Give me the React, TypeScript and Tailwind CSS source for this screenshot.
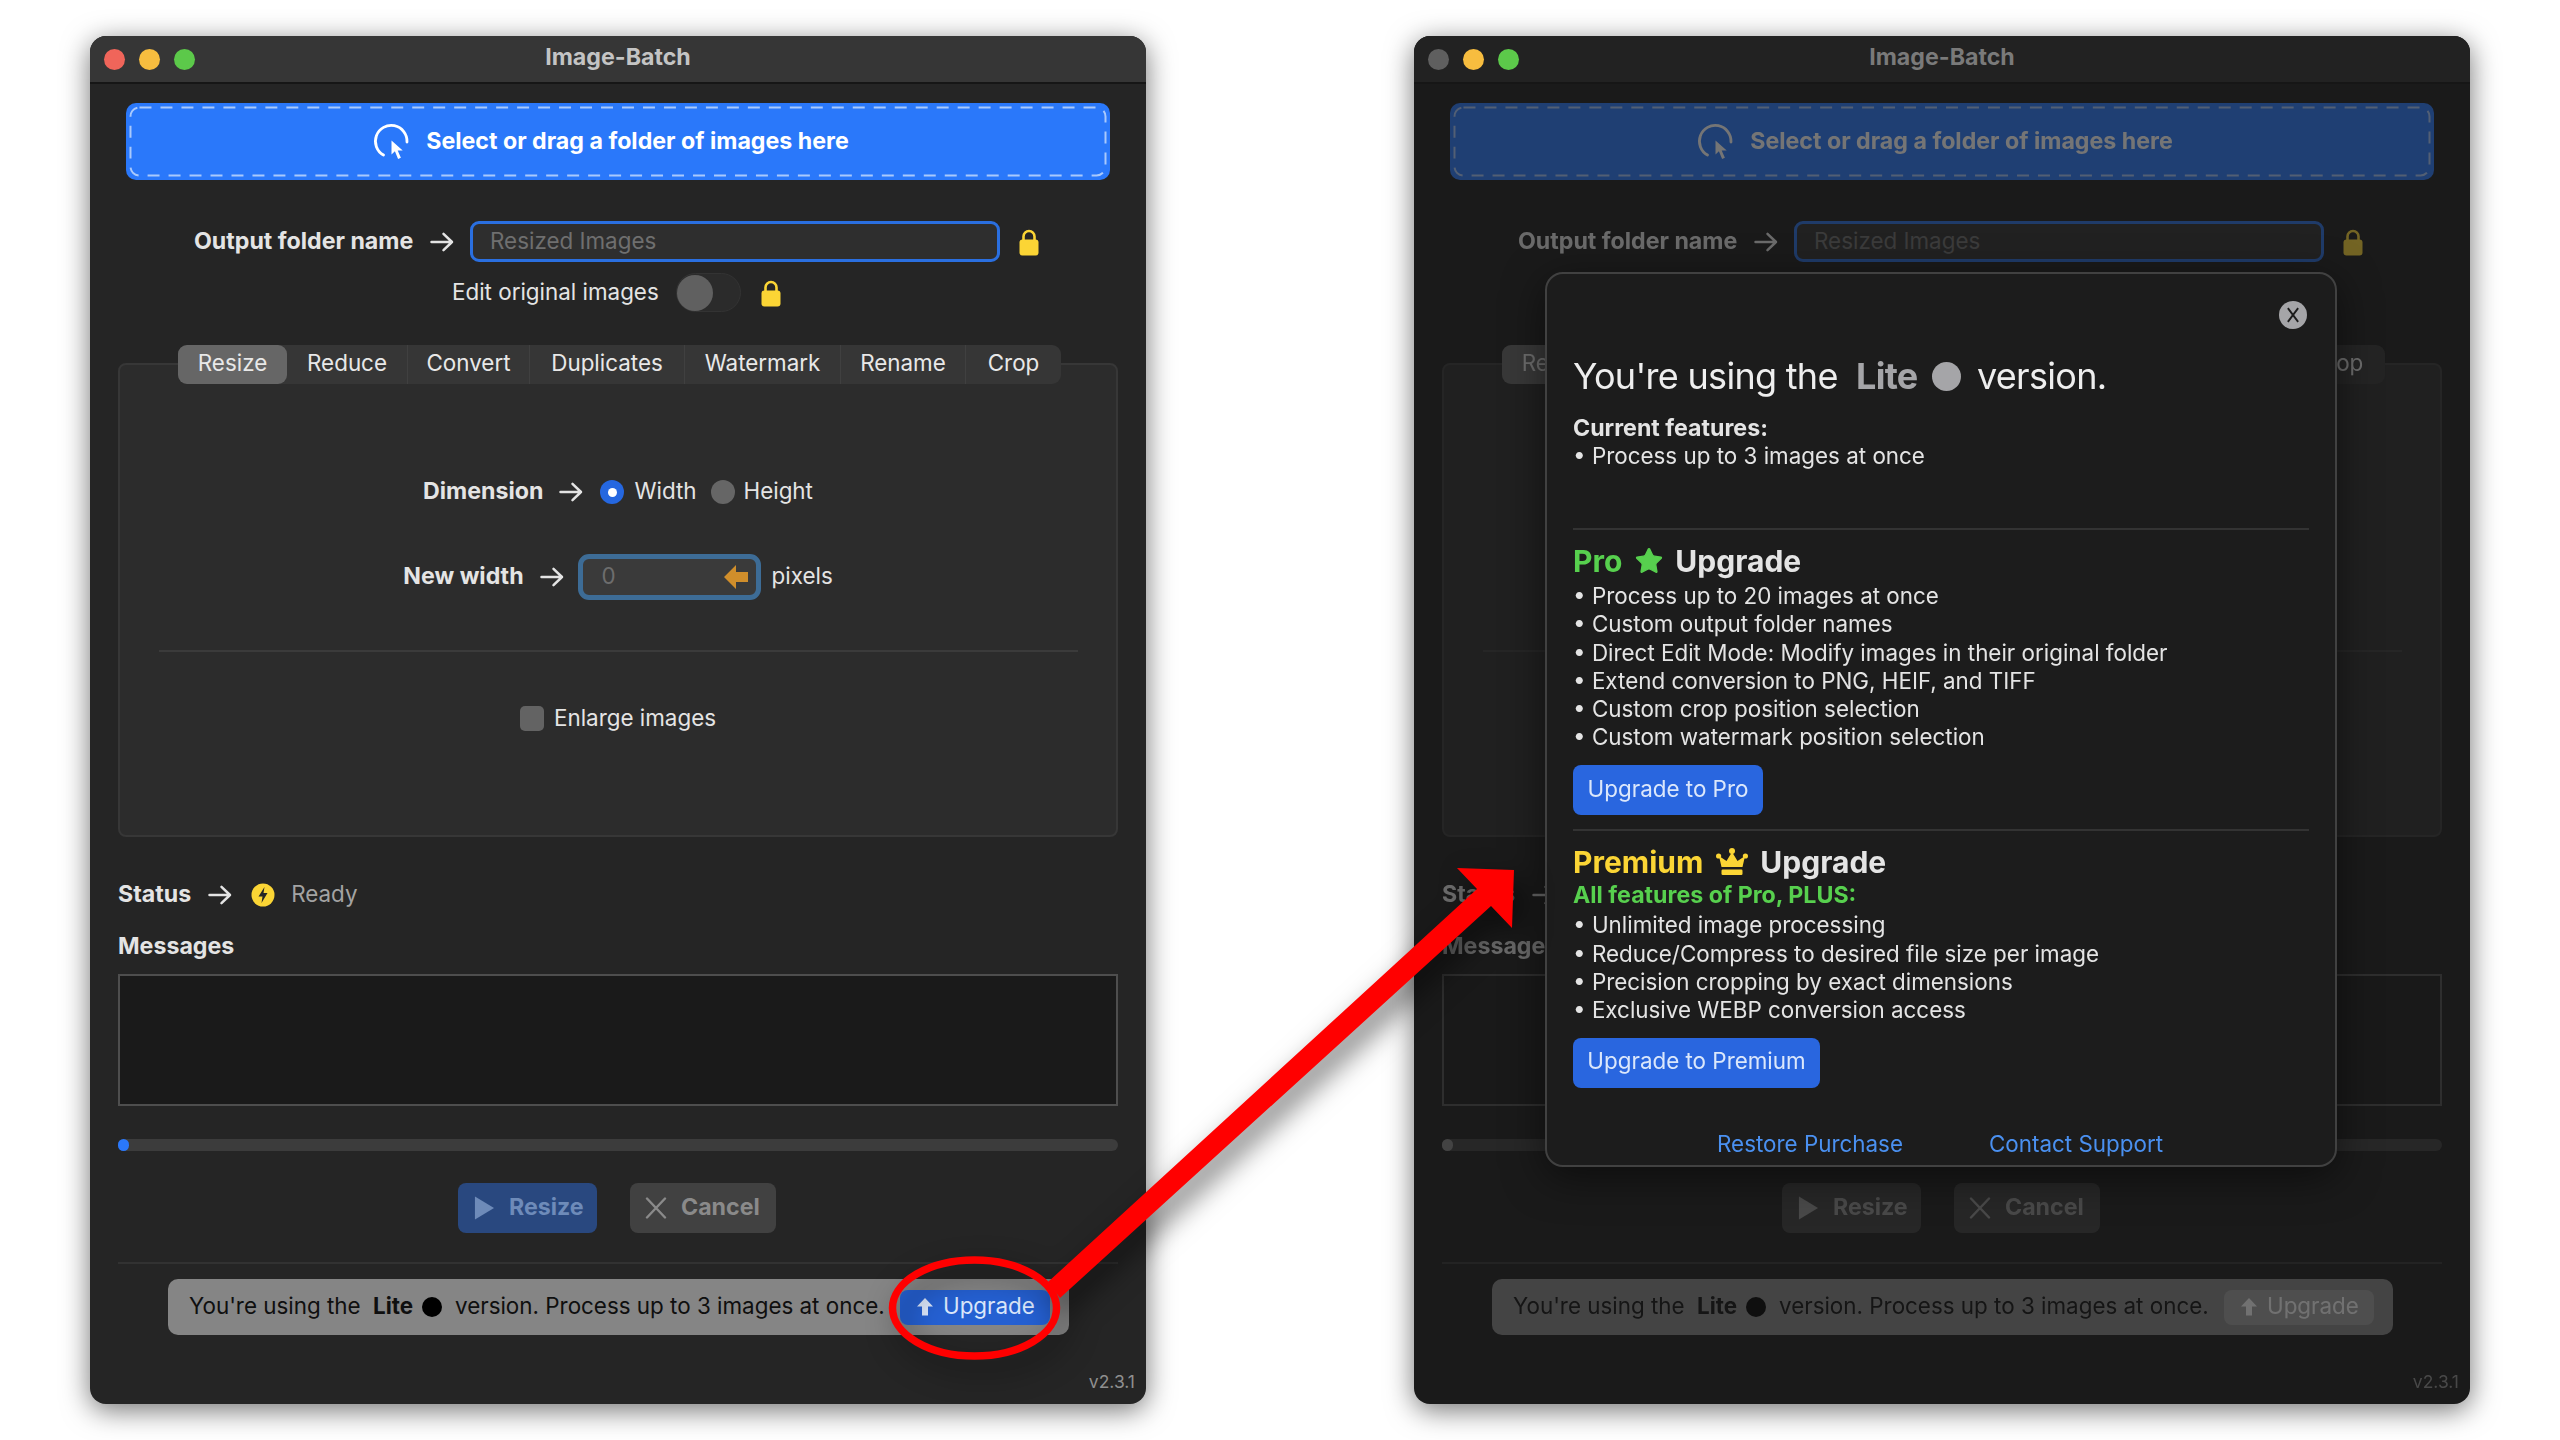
import React from "react";
import { Star } from "lucide-react";

const font = { fontFamily: "Inter, 'Liberation Sans', sans-serif" };
const reg = "text-[22.4px] leading-none pb-[1px] whitespace-nowrap";
const bold = "text-[23.2px] leading-none pb-[1px] font-bold whitespace-nowrap";

function Lock({ className = "" }: { className?: string }) {
  return (
    <svg viewBox="0 0 20 28" className={className} fill="none">
      <path d="M4.500 13V8.500a5.500 5.500 0 0 1 11 0V13" stroke="#fbd535" strokeWidth="2.600" />
      <rect x="0.500" y="11.500" width="19" height="16" rx="3" fill="#fbd535" />
    </svg>
  );
}

function Arrow({ className = "" }: { className?: string }) {
  return (
    <svg viewBox="0 0 24 20" className={"w-[24px] h-[20px] shrink-0 " + className} fill="none" stroke="#e4e4e4" strokeWidth="2.500" strokeLinecap="round" strokeLinejoin="round">
      <path d="M1.500 10h20.500M13.500 1.800 22 10l-8.500 8.200" />
    </svg>
  );
}

function ClickIcon() {
  return (
    <svg viewBox="0 0 38 38" className="w-[38px] h-[38px]" fill="none">
      <path d="M11.500 32A15.800 15.800 0 1 1 35 19" stroke="white" strokeWidth="2.800" strokeLinecap="round" />
      <path d="M19.500 17.500V31.500l3.400-3.200 3.200 7.600 2.800-1.200-3.200-7.300h5z" fill="white" />
    </svg>
  );
}

function BoltIcon() {
  return (
    <svg viewBox="0 0 24 24" className="w-[24px] h-[24px]">
      <circle cx="12" cy="12" r="11.500" fill="#fbd535" />
      <path d="M13.500 4 7.500 13.500h4L10.500 20l6-10h-4z" fill="#252525" />
    </svg>
  );
}

function UpArrow({ className = "" }: { className?: string }) {
  return (
    <svg viewBox="0 0 16 18" className={className} fill="currentColor">
      <path d="M8 0 16 8.500H11V17.500H5V8.500H0z" />
    </svg>
  );
}

function CrownIcon() {
  return (
    <svg viewBox="0 0 32 28" className="w-[32px] h-[28px]" fill="#fbd535">
      <circle cx="16" cy="3" r="3" />
      <circle cx="2.600" cy="8" r="2.600" />
      <circle cx="29.400" cy="8" r="2.600" />
      <path d="M16 4 21.500 13 29 8 26.500 19H5.500L3 8l7.500 5z" />
      <rect x="5.500" y="21.500" width="21" height="5.500" rx="1.200" />
    </svg>
  );
}

const tabs = [
  ["Resize", "w-[109px]"],
  ["Reduce", "w-[121px]"],
  ["Convert", "w-[122px]"],
  ["Duplicates", "w-[155px]"],
  ["Watermark", "w-[156px]"],
  ["Rename", "w-[125px]"],
  ["Crop", "w-[95px]"],
];

function WindowBody({ dimmed }: { dimmed: boolean }) {
  const resizeFill = dimmed ? "#929292" : "#6e8bb9";
  const cancelStroke = dimmed ? "#929292" : "#8a8a8a";
  return (
    <div className="flex flex-col text-[#e4e4e4]">
      <div className="relative mx-[36px] mt-[19px] h-[77px] rounded-[10px] bg-[#2a78fa] flex items-center justify-center gap-[16px] pr-[15px]">
        <svg className="absolute left-0 top-0 w-full h-full" viewBox="0 0 985 77" fill="none">
          <rect x="4.500" y="4.500" width="976" height="68" rx="9" stroke="#a9c9fc" strokeWidth="2" strokeDasharray="12 9" />
        </svg>
        <ClickIcon />
        <span className={bold + " text-white translate-y-[1px]"}>Select or drag a folder of images here</span>
      </div>

      <div className="mt-[41px] h-[41px] flex items-center pl-[104px]">
        <span className={bold + " w-[219px] translate-y-[1px]"}>Output folder name</span>
        <Arrow className="ml-[17px]" />
        <div className="ml-[16px] w-[530px] h-[41px] rounded-[9px] border-[3px] border-[#2a6fe0] bg-[#2e2e2e] flex items-center px-[17px]">
          <span className={reg + " text-[#6f6f6f]"}>Resized Images</span>
        </div>
        <Lock className="ml-[19px] w-[20px] h-[28px]" />
      </div>

      <div className="mt-[11px] h-[39px] flex items-center pl-[362px]">
        <span className={reg + " w-[208px]"}>Edit original images</span>
        <div className="ml-[16px] w-[65px] h-[39px] rounded-full bg-[#2b2b2b] border border-[#333] flex items-center">
          <div className="w-[36px] h-[36px] rounded-full bg-[#606060]" />
        </div>
        <Lock className="ml-[20px] w-[20px] h-[28px]" />
      </div>

      <div className="mx-[28px] mt-[51px] h-[474px] rounded-[8px] bg-[#2c2c2c] border-2 border-[#373737] flex flex-col items-center">
        <div className="-mt-[20px] w-[883px] h-[39px] ml-[58px] self-start shrink-0 rounded-[9px] bg-[#363636] flex items-center">
          {tabs.map(([t, w], i) => (
            <div
              key={t}
              className={
                w +
                " h-full flex items-center justify-center " +
                (i === 0 ? "rounded-[9px] bg-[#666666]" : i < 6 ? "border-r border-[#404040]" : "")
              }
            >
              <span className={reg + " text-[#e8e8e8] -translate-y-[1px]"}>{t}</span>
            </div>
          ))}
        </div>

        <div className="mt-[96px] h-[24px] flex items-center">
          <span className={bold}>Dimension</span>
          <Arrow className="ml-[16px]" />
          <div className="ml-[17px] w-[24px] h-[24px] rounded-full bg-[#2567e0] flex items-center justify-center">
            <div className="w-[9px] h-[9px] rounded-full bg-white" />
          </div>
          <span className={reg + " ml-[10px]"}>Width</span>
          <div className="ml-[14px] w-[24px] h-[24px] rounded-full bg-[#666666]" />
          <span className={reg + " ml-[9px]"}>Height</span>
        </div>

        <div className="mt-[50px] h-[46px] flex items-center">
          <span className={bold}>New width</span>
          <Arrow className="ml-[16px]" />
          <div className="ml-[14px] w-[183px] h-[46px] rounded-[11px] border-[5px] border-[#3d6c96] bg-[#3a3a3a] flex items-center justify-between pl-[19px] pr-[8px]">
            <span className={reg + " text-[#6d6d6d]"}>0</span>
            <svg viewBox="0 0 24 24" className="w-[24px] h-[24px] rotate-[-90deg]" fill="#d08e2b">
              <path d="M12 0 24 12H17V24H7V12H0z" />
            </svg>
          </div>
          <span className={reg + " ml-[11px]"}>pixels</span>
        </div>

        <div className="mt-[50px] w-[919px] h-[2px] bg-[#3b3b3b]" />

        <div className="mt-[54px] h-[25px] flex items-center">
          <div className="w-[24px] h-[25px] rounded-[5px] bg-[#636363]" />
          <span className={reg + " ml-[10px]"}>Enlarge images</span>
        </div>
      </div>

      <div className="mx-[28px] mt-[46px] h-[24px] flex items-center">
        <span className={bold}>Status</span>
        <Arrow className="ml-[17px]" />
        <div className="ml-[19px]"><BoltIcon /></div>
        <span className={reg + " ml-[16px] text-[#a3a3a3]"}>Ready</span>
      </div>

      <div className="mx-[28px] mt-[28px] h-[24px] flex items-center">
        <span className={bold}>Messages</span>
      </div>

      <div className="mx-[28px] mt-[15px] h-[132px] bg-[#1a1a1a] border-2 border-[#4e4e4e]" />

      <div className="mx-[28px] mt-[33px] h-[12px] rounded-full bg-[#3c3c3c]">
        <div className={"w-[11px] h-full rounded-full " + (dimmed ? "bg-[#828282]" : "bg-[#2a78fa]")} />
      </div>

      <div className="mt-[32px] h-[50px] flex items-center justify-center gap-[33px] pr-[2px]">
        <div className={"w-[139px] h-full rounded-[8px] flex items-center pl-[16px] gap-[14px] " + (dimmed ? "bg-[#3d3d3d]" : "bg-[#29487f]")}>
          <svg viewBox="0 0 22 24" className="w-[21px] h-[24px]" fill={resizeFill}><path d="M1 0 21 12 1 24z" /></svg>
          <span className={bold + (dimmed ? " text-[#929292]" : " text-[#6e8bb9]")}>Resize</span>
        </div>
        <div className={"w-[146px] h-full rounded-[8px] flex items-center pl-[15px] gap-[14px] " + (dimmed ? "bg-[#3d3d3d]" : "bg-[#414141]")}>
          <svg viewBox="0 0 22 22" className="w-[22px] h-[22px]" fill="none" stroke={cancelStroke} strokeWidth="2.400" strokeLinecap="round"><path d="M2 1.500 20 20.500M20 1.500 2 20.500" /></svg>
          <span className={bold + (dimmed ? " text-[#929292]" : " text-[#8a8a8a]")}>Cancel</span>
        </div>
      </div>

      <div className="mx-[28px] mt-[29px] h-[2px] bg-[#323232]" />

      <div className="ml-[78px] mt-[15px] w-[901px] h-[56px] rounded-[10px] bg-[#858585] flex items-center pl-[21px] text-[#0f0f0f]">
        <span className={reg + " w-[170px]"}>You're using the</span>
        <span className={reg + " ml-[14px] w-[40px] font-bold"}>Lite</span>
        <div className="ml-[9px] w-[20px] h-[20px] rounded-full bg-black" />
        <span className={reg + " ml-[13px] w-[431px]"}>version. Process up to 3 images at once.</span>
        <div className={"ml-[14px] w-[150px] h-[35px] rounded-[8px] flex items-center pl-[17px] gap-[10px] " + (dimmed ? "bg-[#9e9e9e] text-[#f5f5f5]" : "bg-[#2560d2] text-[#dbe7fb]")}>
          <UpArrow className="w-[16px] h-[18px]" />
          <span className={reg}>Upgrade</span>
        </div>
      </div>

      <div className="mt-[39px] h-[20px] pr-[11px] flex items-center justify-end text-[17.5px] pb-[3px] text-[#8f8f8f]">v2.3.1</div>
    </div>
  );
}

function Bullets({ items }: { items: string[] }) {
  return (
    <div className="flex flex-col">
      {items.map((t) => (
        <div key={t} className="h-[28.2px] leading-[26px] text-[22.4px] whitespace-nowrap">
          • {t}
        </div>
      ))}
    </div>
  );
}

function Modal() {
  return (
    <div className="absolute left-[131px] top-[236px] w-[792px] h-[895px] rounded-[18px] bg-[#1c1c1c] border-2 border-[#414141] shadow-[0_10px_40px_rgba(0,0,0,0.5)] px-[26px] flex flex-col text-[#e4e4e4]">
      <div className="absolute right-[28px] top-[27px] w-[28px] h-[28px] rounded-full bg-[#a5a5a8] flex items-center justify-center">
        <svg viewBox="0 0 14 18" className="w-[12px] h-[16px]" fill="none" stroke="#1c1c1c" strokeWidth="2.200"><path d="M1 1 13 17M13 1 1 17" /></svg>
      </div>
      <div className="mt-[80px] h-[44px] flex items-center text-[36px] tracking-[-0.7px] text-[#eeeeee] whitespace-nowrap">
        <span className="w-[268px]">You're using the</span>
        <span className="ml-[15px] w-[67px] font-bold text-[#a5a5a8]">Lite</span>
        <div className="ml-[9px] w-[29px] h-[29px] rounded-full bg-[#a5a5a8]" />
        <span className="ml-[16px]">version.</span>
      </div>
      <div className="mt-[17px] h-[28px] flex items-center"><span className={bold}>Current features:</span></div>
      <div className="mt-[0px]"><Bullets items={["Process up to 3 images at once"]} /></div>

      <div className="mt-[57px] h-[2px] bg-[#333333]" />

      <div className="mt-[11px] h-[40px] flex items-center text-[30px] font-bold whitespace-nowrap">
        <span className="text-[#57d04e]">Pro</span>
        <Star className="ml-[12px] w-[30px] h-[30px] fill-[#57d04e] text-[#57d04e]" strokeWidth={1} />
        <span className="ml-[11px]">Upgrade</span>
      </div>
      <div className="mt-[2px]">
        <Bullets
          items={[
            "Process up to 20 images at once",
            "Custom output folder names",
            "Direct Edit Mode: Modify images in their original folder",
            "Extend conversion to PNG, HEIF, and TIFF",
            "Custom crop position selection",
            "Custom watermark position selection",
          ]}
        />
      </div>
      <div className="mt-[13px] w-[190px] h-[50px] rounded-[8px] bg-[#2966df] flex items-center justify-center">
        <span className={reg + " text-[#dbe7fb] -translate-y-[1px]"}>Upgrade to Pro</span>
      </div>

      <div className="mt-[14px] h-[2px] bg-[#333333]" />

      <div className="mt-[12px] h-[38px] flex items-center text-[30px] font-bold whitespace-nowrap">
        <span className="text-[#fbd535]">Premium</span>
        <div className="ml-[13px]"><CrownIcon /></div>
        <span className="ml-[12px]">Upgrade</span>
      </div>
      <div className="mt-[1px] h-[28px] flex items-center"><span className={bold + " text-[#57d04e]"}>All features of Pro, PLUS:</span></div>
      <div className="mt-[2px]">
        <Bullets
          items={[
            "Unlimited image processing",
            "Reduce/Compress to desired file size per image",
            "Precision cropping by exact dimensions",
            "Exclusive WEBP conversion access",
          ]}
        />
      </div>
      <div className="mt-[13px] w-[247px] h-[50px] rounded-[8px] bg-[#2966df] flex items-center justify-center">
        <span className={reg + " text-[#dbe7fb] -translate-y-[1px]"}>Upgrade to Premium</span>
      </div>
      <div className="mt-[43px] h-[28px] flex items-center text-[#4a90f0]">
        <span className={reg + " ml-[144px] w-[187px]"}>Restore Purchase</span>
        <span className={reg + " ml-[85px]"}>Contact Support</span>
      </div>
    </div>
  );
}

function AppWindow({ dimmed = false }: { dimmed?: boolean }) {
  return (
    <div
      className={
        "relative w-[1056px] h-[1368px] shrink-0 rounded-[16px] overflow-hidden shadow-[0_6px_28px_rgba(0,0,0,0.55)] " +
        (dimmed ? "bg-[#1a1a1a]" : "bg-[#252525]")
      }
    >
      <div
        className={
          "relative h-[48px] flex items-center justify-center border-b-2 border-[#161616] " +
          (dimmed ? "bg-[#222222]" : "bg-[#363636]")
        }
      >
        <div className="absolute left-[14px] top-[13px] flex gap-[14px]">
          <div className={"w-[21px] h-[21px] rounded-full " + (dimmed ? "bg-[#5f5f5f]" : "bg-[#f0655a]")} />
          <div className="w-[21px] h-[21px] rounded-full bg-[#f7bd3f]" />
          <div className="w-[21px] h-[21px] rounded-full bg-[#5cc94a]" />
        </div>
        <span className={"text-[23.2px] leading-none pb-[3px] font-bold " + (dimmed ? "text-[#7a7a7a]" : "text-[#c4c4c4]")}>Image-Batch</span>
      </div>
      <div className={dimmed ? "opacity-40" : ""}>
        <WindowBody dimmed={dimmed} />
      </div>
      {dimmed && <Modal />}
    </div>
  );
}

function Annotation() {
  return (
    <svg
      viewBox="0 0 2560 1440"
      className="absolute left-0 top-0 w-[2560px] h-[1440px] pointer-events-none drop-shadow-[8px_12px_14px_rgba(0,0,0,0.55)]"
      fill="none"
    >
      <polygon points="1048,1282 1477,889 1457,868 1514,870 1512,928 1491,906 1060,1298" fill="#ff0000" />
      <ellipse cx="974.500" cy="1308" rx="82" ry="48" stroke="#ff0000" strokeWidth="7.500" />
    </svg>
  );
}

export default function App() {
  return (
    <div className="relative w-[2560px] h-[1440px] bg-white overflow-hidden flex items-start pl-[90px] pt-[36px] gap-[268px]" style={font}>
      <AppWindow />
      <AppWindow dimmed />
      <Annotation />
    </div>
  );
}
